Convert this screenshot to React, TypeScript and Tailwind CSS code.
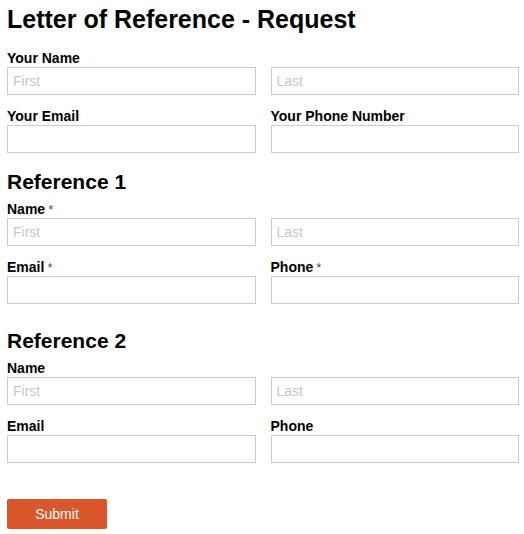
import React from "react";

const font = { fontFamily: '"Liberation Sans", Arial, sans-serif' };

function Label({ text, req }: { text: string; req?: boolean }) {
  return (
    <div className="h-4 text-[14px] leading-4 font-bold text-black mb-px">
      {text}
      {req && <span className="text-[#8b1a1a] font-normal text-[12px]"> *</span>}
    </div>
  );
}

function Input({ ph }: { ph?: string }) {
  return (
    <input
      placeholder={ph}
      className="block w-full h-[28px] border border-[#cccccc] bg-white px-[5px] text-[14px] text-black placeholder:text-[#c8c8c8] outline-none"
      style={font}
    />
  );
}

function Field({ label, req, ph }: { label: string; req?: boolean; ph?: string }) {
  return (
    <div>
      <Label text={label} req={req} />
      <Input ph={ph} />
    </div>
  );
}

function NameRow({ label, req }: { label: string; req?: boolean }) {
  return (
    <div>
      <Label text={label} req={req} />
      <div className="grid grid-cols-2 gap-x-[15px]">
        <Input ph="First" />
        <Input ph="Last" />
      </div>
    </div>
  );
}

export default function App() {
  return (
    <div className="w-[524px] h-[534px] bg-white pl-[7px] pr-[5px]" style={font}>
      <h1 className="pt-[5px] text-[25px] leading-[28px] font-bold text-black">
        Letter of Reference - Request
      </h1>
      <div className="mt-[17px]">
        <NameRow label="Your Name" />
      </div>
      <div className="mt-[13px] grid grid-cols-2 gap-x-[15px]">
        <Field label="Your Email" />
        <Field label="Your Phone Number" />
      </div>
      <h2 className="mt-[17px] text-[21px] leading-[24px] font-bold text-black">Reference 1</h2>
      <div className="mt-[7px]">
        <NameRow label="Name" req />
      </div>
      <div className="mt-[13px] grid grid-cols-2 gap-x-[15px]">
        <Field label="Email" req />
        <Field label="Phone" req />
      </div>
      <h2 className="mt-[25px] text-[21px] leading-[24px] font-bold text-black">Reference 2</h2>
      <div className="mt-[7px]">
        <NameRow label="Name" />
      </div>
      <div className="mt-[13px] grid grid-cols-2 gap-x-[15px]">
        <Field label="Email" />
        <Field label="Phone" />
      </div>
      <button
        className="mt-[36px] block w-[100px] h-[30px] rounded-[2px] bg-[#d9552a] text-white text-[14px]"
        style={font}
      >
        Submit
      </button>
    </div>
  );
}
